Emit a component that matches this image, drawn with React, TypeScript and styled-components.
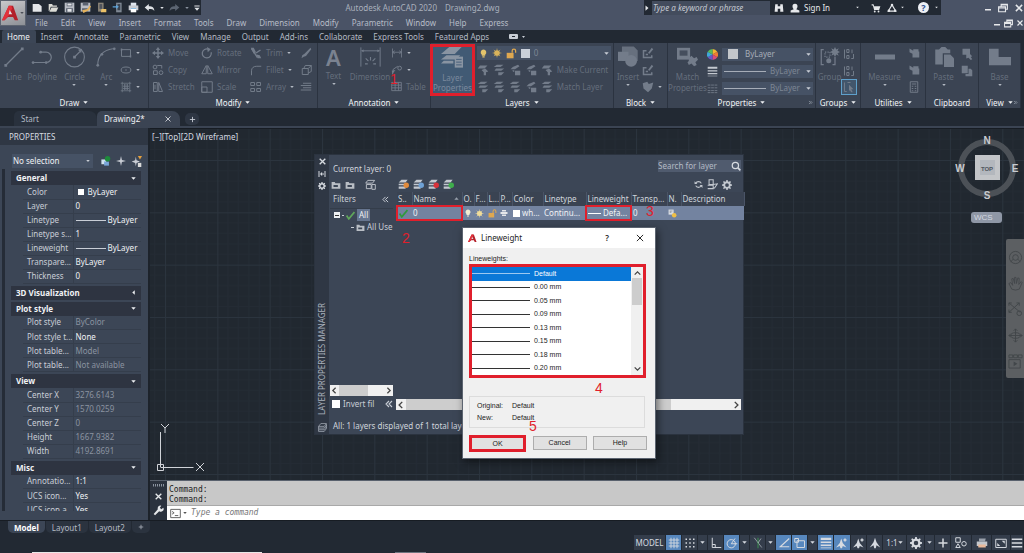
import React from 'react';
import styled, { createGlobalStyle, css } from 'styled-components';

const c = {
  bar: '#4a5366',
  ribbon: '#3b4453',
  dark: '#222933',
  canvas: '#212830',
  panel: '#3c4656',
  strip: '#2f3744',
  section: '#2e3441',
  field: '#465265',
  dim: '#656e7c',
  icon: '#737c8a',
  text: '#c9ced6',
  white: '#f0f2f5',
  red: '#e01f2c',
  blue: '#5787bd',
};

const Global = createGlobalStyle`
  *, *::before, *::after { box-sizing: border-box; }
  html, body { margin: 0; padding: 0; background: ${c.dark}; }
  body { font-family: "Noto Sans", "Open Sans", sans-serif; font-size: 8px; line-height: 12px; color: ${c.text}; overflow: hidden; }
  button, input, select { font: inherit; color: inherit; margin: 0; padding: 0; border: 0; background: none; border-radius: 0; outline: none; }
  button { white-space: nowrap; }
  svg { display: block; flex: none; }
  table { border-collapse: collapse; }
`;

/* ---------- icons ---------- */

const line = { fill: 'none', stroke: 'currentColor', strokeWidth: 1.3 };
const solid = { fill: 'currentColor' };

const glyphs: Record<string, React.ReactNode> = {
  newFile: <path d="M1 3h9l4 3v8H1z" fill="#e4e6e9" />,
  open: <g fill="#dcdcd6"><path d="M1 3h5l1 2h6v2H4l-2 6H1z" /><path d="M5 8h10l-3 6H2z" /></g>,
  save: <g><path d="M1 1h14v14H1z" fill="#b9bdc4" /><path d="M4 1h8v5H4zM3 9h10v6H3z" fill="#5b6370" /><path d="M5 2h6v3H5zM5 10h6v4H5z" fill="#e2e4e7" /></g>,
  saveAs: <g><path d="M1 1h14v13H1z" fill="#b9bdc4" /><path d="M4 1h8v4H4zM3 9h8v5H3z" fill="#5b6370" /><path d="M3 12l8-2 3-5 2 1-3 6-8 4z" fill="#e3b15b" /></g>,
  webOpen: <g><path d="M3 1h8v13H3z" fill="#8b8577" /><path d="M5 3h4v7H5z" fill="#4f535c" /><path d="M8 10h7v5H7z" fill="#edc267" /></g>,
  mobile: <g><path d="M6 1h8v14H6z" fill="#7f8894" /><path d="M8 3h4v9H8z" fill="#39414d" /><path d="M1 6h5V4l4 3-4 3V8H1z" fill="#5fa3d8" /></g>,
  print: <g><path d="M4 1h8v5H4z" fill="#dfe6ee" /><path d="M1 5h14v7H1z" fill="#c8ccd2" /><path d="M4 9h8v6H4z" fill="#fff" /><path d="M4 9h8v1H4z" fill="#5fa3d8" /></g>,
  undo: <path d="M7 3v3c5 0 8 2 8 7-2-3-4-3-8-3v3L1 8z" {...solid} />,
  redo: <path d="M9 3v3c-5 0-8 2-8 7 2-3 4-3 8-3v3l6-5z" {...solid} />,
  down: <path d="M1 4h14l-7 8z" {...solid} />,
  left: <path d="M12 1v14L4 8z" {...solid} />,
  right: <path d="M4 1v14l8-7z" {...solid} />,
  customize: <path d="M1 1h14v3H1zM1 7h14l-7 8z" {...solid} />,
  binoculars: <path d="M2 2h4v3h4V2h4l1 12h-5V9H6v5H1z" {...solid} />,
  user: <path d="M8 1c3 0 4 2 4 4s-1 4-2 5l5 2v3H1v-3l5-2C5 9 4 7 4 5s1-4 4-4z" {...solid} />,
  cart: <g><path d="M1 2h3l1 3h10l-2 6H5L3 4H1z" {...solid} /><circle cx="6" cy="13.5" r="1.5" {...solid} /><circle cx="12" cy="13.5" r="1.5" {...solid} /></g>,
  tri: <g><path d="M8 3l6 10H2z" {...line} strokeWidth="1.8" /><circle cx="8" cy="3" r="2" {...solid} /><circle cx="3" cy="12.5" r="2" {...solid} /><circle cx="13" cy="12.5" r="2" {...solid} /></g>,
  min: <path d="M2 10h12v3H2z" {...solid} />,
  restore: <path d="M5 5V2h10v8h-3M1 6h11v8H1zM1 8h11M5 3h10" {...line} strokeWidth="1.8" />,
  close: <path d="M3 3l10 10M13 3L3 13" {...line} strokeWidth="2.400" />,
  thinClose: <path d="M3 3l10 10M13 3L3 13" {...line} strokeWidth="1.5" />,
  plus: <path d="M8 2v12M2 8h12" {...line} strokeWidth="2" />,
  lineTool: <g><path d="M2 14L14 2" {...line} strokeWidth=".9" /><path d="M1 13h2v2H1zM13 1h2v2h-2z" {...solid} /></g>,
  polyline: <g><path d="M1 12h10a3.500 3.500 0 0 0 0-7.500H7" {...line} strokeWidth=".9" /><circle cx="1.500" cy="12" r="1" {...solid} /><circle cx="11" cy="12" r="1" {...solid} /><circle cx="7" cy="4.500" r="1" {...solid} /></g>,
  circle: <g><circle cx="8" cy="8" r="7.200" {...line} strokeWidth=".8" /><path d="M8 8l4-4" {...line} strokeWidth=".8" /><path d="M7 7h2v2H7zM13.500 2l-.7 3-2.300-2.200z" {...solid} /></g>,
  arc: <g><path d="M2 14C2 7 6 3 13 2" {...line} strokeWidth=".8" /><circle cx="2" cy="14" r="1" {...solid} /><circle cx="5" cy="6" r="1" {...solid} /><circle cx="14" cy="2" r="1" {...solid} /></g>,
  rect: <g><path d="M2 3.500h12v9H2z" {...line} /><path d="M1 2h2v3H1zM13 11h2v3h-2z" {...solid} /></g>,
  ellipse: <g><ellipse cx="8" cy="8" rx="6.500" ry="4" {...line} /><circle cx="8" cy="8" r="1" {...solid} /></g>,
  hatch: <path d="M3 1v14M13 1v14M1 3h14M1 13h14M6 4v8M8 4v8M10 4v8M4 7h8M4 10h8" {...line} strokeWidth="1" />,
  move: <path d="M8 0l3 4H9v3h3V5l4 3-4 3V9H9v3h2l-3 4-3-4h2V9H4v2L0 8l4-3v2h3V4H5z" {...solid} />,
  copy: <g><circle cx="4" cy="4" r="2.500" {...line} /><path d="M7 2h6v4M2 9h5v5H2z" {...line} /><circle cx="12" cy="11.500" r="2.500" {...line} /></g>,
  stretch: <path d="M2 2h5v12H2zM9 2l5 12H9zM4 5v6" {...line} />,
  rotate: <g><path d="M10 3a6 6 0 1 0 3.500 4" {...line} strokeWidth="1.700" /><path d="M8 0l5 3-4 4z" {...solid} /></g>,
  mirror: <path d="M7 2v11H1zM9 2v11h6z" {...line} />,
  scale: <path d="M1 1h14v14H1zM1 8h7v7H1z" {...line} />,
  trim: <g><path d="M2 2l8 12M8 8l6-4" {...line} strokeWidth="2" /><path d="M1 1h4l3 6-3 2zM9 10l4 1 2 4h-5z" {...solid} /></g>,
  fillet: <path d="M2 15V9c0-4 3-6 7-6h6" {...line} />,
  array: <path d="M1 2h5v4H1zM9 2h5v4H9zM1 10h5v4H1zM9 10h5v4H9z" {...line} />,
  erase: <path d="M14 1l1 2-7 9-3 1-3 2 1-4 3-2z" {...solid} />,
  explode: <path d="M3 6h8v8H3zM5 6l2-4h8v8l-4 2M11 6l4-4" {...line} />,
  offset: <path d="M4 3h11M1 6h14M4 9h11M1 12h14" {...line} />,
  dimension: <g><path d="M1 1v14M15 1v14M2 3.500h12" {...line} strokeWidth=".7" /><path d="M1 3.500l2-1v2zM15 3.500l-2-1v2z" {...solid} /><path d="M4.500 9l2 2M8 8v2.500M11.500 9l-2 2M4 13h2M10 13h2" {...line} strokeWidth=".8" /></g>,
  linear: <path d="M2 2v12M14 2v12M2 7h12M5 5L2 7l3 2M11 5l3 2-3 2" {...line} strokeWidth="1.100" />,
  leader: <g><path d="M2 14l1-7 6-4" {...line} /><circle cx="11.500" cy="5.500" r="2.500" {...line} /><path d="M1 9l5-1-4 5z" {...solid} /></g>,
  grid: <path d="M1 2h14v12H1zM1 6h14M1 10h14M6 2v12M11 2v12" {...line} />,
  layers: <g {...solid}><path d="M6 0h9l-5 5H0z" /><path d="M4 6h10l-3 3H0z" /><path d="M2 10h7v2H0z" /><path d="M10 7h6v8h-6z" /><path d="M11 9h4M11 11h4M11 13h4" stroke="#47607b" strokeWidth=".7" /></g>,
  bulb: <path d="M8 1a5 5 0 0 1 3 9v2H5v-2a5 5 0 0 1 3-9zM6 13h4v2H6z" {...solid} />,
  sun: <g><circle cx="8" cy="8" r="4.500" {...solid} /><path d="M8 1v14M1 8h14M3 3l10 10M13 3L3 13" {...line} strokeWidth="1" /></g>,
  lock: <g><path d="M1 7h10v8H1z" {...solid} /><path d="M9 7V4a2.500 2.500 0 0 1 5 0v3" {...line} strokeWidth="1.800" /></g>,
  layerA: <path d="M4 2h10l-4 4H1zM6 8l5-2 4 4-3 1v4H9v-4z" {...solid} />,
  layerB: <path d="M5 1h9l-4 3H1zM4 6h11l-4 3H2zM7 11h8l-4 4H7z" {...solid} />,
  layerC: <path d="M5 4l7-3 2 2-6 4H2zM8 9h7v6H8zM4 9l3-1v3z" {...solid} />,
  insert: <g {...solid}><path d="M3 0h9l3 3v8H3z" opacity=".8" /><path d="M0 4h8v7H0z" /><circle cx="10" cy="11" r="4.500" /></g>,
  blockEdit: <path d="M1 4h5v2H3v7h9v-2h2v4H1zM8 8l5-7 2 2-5 6zM5 9h3v2H5z" {...solid} />,
  tag: <path d="M1 3l6-2 2 3 6-2-2 8-5 5-6-5z" {...solid} />,
  match: <g {...solid}><path d="M0 1h10v9H0z" /><path d="M2 3h6v4H2z" fill="#454e5d" /><path d="M9 9l2-2 2 2 2-1 1 2-2 2 1 2-2 1-2-2-2 1-1-2 1-1z" /></g>,
  weights: <path d="M1 1h14v3H1zM1 6h14v2H1zM1 10h14v2H1zM1 14h14v1H1z" {...solid} />,
  dashes: <path d="M1 3h14M1 7h14M1 11h14M1 14h14" {...line} strokeDasharray="4 1" />,
  group: <g><path d="M3 2H1v12h2M12 8v6h-2" {...line} strokeWidth="1" /><path d="M4 4h4v4H4z" {...line} strokeWidth="1" strokeDasharray="1 1" /><circle cx="7" cy="11" r="2" {...solid} /><path d="M12 0l1 2 2-1-1 2 2 1-2 1 1 2-2-1-1 2-1-2-2 1 1-2-2-1 2-1-1-2 2 1z" {...solid} /></g>,
  ungroup: <path d="M2 2v12M5 2h3v4H5zM5 10h3v4H5zM12 2v5M14 8v6h-3" {...line} />,
  select: <g><path d="M2 2v12h3M10 2H6" {...line} /><path d="M8 5l6 6h-3l2 4h-2l-2-3-1 2z" {...solid} /></g>,
  measure: <path d="M0 6h16v4H0z" {...solid} />,
  quick: <path d="M2 2l5 3V3h7v3h1v8H6V9L2 7z" {...solid} />,
  calc: <path d="M3 1h10v14H3zM5 4h6M5 7h2M9 7h2M5 10h2M9 10h2M5 13h2M9 13h2" {...line} />,
  paste: <g {...solid}><path d="M1 2h3l2-2h3l2 2h2v3H7v9H1z" /><path d="M8 6h5l3 3v7H8z" /></g>,
  cut: <path d="M2 1h10v7l3 3-2 1 2 3-2 1-3-3-3 1V9H2z" {...solid} />,
  copyDoc: <path d="M1 1h8v10H1zM10 5h3l2 2v8H6v-3h4z" {...solid} />,
  base: <path d="M0 2h7v6h9v6H0z" {...solid} />,
  pick: <g><path d="M2 5h7v7H2z" fill="#cfe3ee" /><path d="M6 8h7v6H6z" fill="#79a6d8" /><circle cx="11" cy="4" r="4" fill="#1e8a3c" /></g>,
  cross: <path d="M8 0l1.500 6.500L16 8l-6.500 1.500L8 16 6.500 9.500 0 8l6.500-1.500z" {...solid} />,
  crossFilter: <g><path d="M7 1l1 5 5 2-5 2-1 5-1-5-5-2 5-2z" {...solid} /><path d="M10 0h6l-3 5z" fill="#e6a03c" /><path d="M10 10h5v6h-5z" fill="#d9d9d9" /></g>,
  newVp: <g><path d="M1 1h9v9H1z" fill="#d9dde3" /><path d="M3 3h5v1H3zM3 5h3v1H3z" fill="#6b7485" /><circle cx="11" cy="11" r="4" fill="#f0bf45" /></g>,
  folder: <path d="M1 3h5l1 2h8v9H1zM4 8h7v3H4z" fill="#b9bec5" fillRule="evenodd" />,
  states: <path d="M4 2h10l-3 4H1zM2 8h7v6H2zM10 8h5v7h-5z" {...line} />,
  search: <g><circle cx="7" cy="7" r="5" {...line} strokeWidth="2" /><path d="M11 11l4 4" {...line} strokeWidth="2.500" /></g>,
  refresh: <g><path d="M3 10a5.500 5.500 0 0 0 10 0M13 6A5.500 5.500 0 0 0 3 6" {...line} strokeWidth="2" /><path d="M1 2v5h5zM15 14V9h-5z" {...solid} /></g>,
  overrides: <path d="M3 1h6v7H3zM1 9h8v5H1M9 8l6-1-4 6H9" {...line} strokeWidth="1.500" />,
  gear: <path fillRule="evenodd" d="M7 0h2l.6 2.300 1.500.6L13 1.600 14.400 3l-1.300 2 .6 1.400L16 7v2l-2.300.6-.6 1.500 1.300 1.900-1.400 1.400-1.900-1.300-1.500.6L9 16H7l-.6-2.300-1.500-.6L3 14.400 1.600 13l1.300-1.900-.6-1.500L0 9V7l2.300-.6.6-1.500L1.600 3 3 1.600l1.900 1.300 1.500-.6zM8 5a3 3 0 1 0 0 6 3 3 0 0 0 0-6z" {...solid} />,
  pin: <path d="M1 2h2v12H1zM13 2h2v12h-2zM4 8l4-4v8zM12 8L9 5v6z" {...solid} />,
  check: <path d="M1 8l4 6L15 2" {...line} strokeWidth="3" />,
  sort: <path d="M1 12h14L8 4z" {...solid} />,
  plot: <path d="M4 2h8v3H4zM1 6h14v4H1zM4 11h8v3H4z" {...solid} />,
  wrench: <path d="M15 4l-3 2-2-2 2-3a4 4 0 0 0-5 5l-6 7 2 2 6-6a4 4 0 0 0 6-5z" {...solid} />,
  prompt: <path d="M1 2h14v12H1zM3 5l3 2-3 2M7 11h5" {...line} />,
  dots: <g {...solid}>{[2, 7, 12].map((y) => [2, 7, 12].map((x) => <rect key={`${x}${y}`} x={x} y={y} width="2" height="2" />))}</g>,
  snapGrid: <path d="M4 1v14M12 1v14M1 4h14M1 12h14M8 1v14M1 8h14" {...line} strokeWidth="1.200" />,
  ortho: <path d="M3 1v13h12M3 10h4v4" {...line} />,
  polar: <g><circle cx="7" cy="9" r="5.500" {...line} /><path d="M7 9h8M7 9l5-7" {...line} /></g>,
  iso: <g><path d="M3 1l10 13" {...line} opacity=".6" /><path d="M8 1v14" {...line} stroke="#3fa653" opacity=".8" /><path d="M8 8l4-6" {...line} opacity=".6" /></g>,
  otrack: <path d="M15 2L3 13h12" {...line} strokeWidth="1.500" />,
  osnap: <g><path d="M4 5h10v9H4z" {...line} /><path d="M1 2h5v5H1z" {...line} /></g>,
  person: <path d="M8 1l2 6 5 7-5-3-1 4H7l-1-4-5 3 5-7z" {...solid} />,
  personStar: <g><path d="M7 2l2 6 5 6-5-2-1 3H6l-1-3-5 2 5-6z" {...solid} /><path d="M12 1l1 2 2 1-2 1-1 2-1-2-2-1 2-1z" {...solid} /></g>,
  isolate: <g><path d="M1 1h6v6H1zM4 9l3 5H1z" {...line} /><circle cx="12" cy="9" r="3" {...line} /></g>,
  printer: <g><path d="M4 2h9l-1 4H4z" fill="#9aa1ab" /><path d="M1 6h14v6H1z" fill="#c3c7cc" /><path d="M3 10h10v4H3z" fill="#e9b99a" /></g>,
  expand: <g><path d="M1 3h14v11H1z" {...line} /><path d="M9 5h4v4zM3 8v4h4z" {...solid} /></g>,
  menu: <path d="M1 3h14M1 8h14M1 13h14" {...line} strokeWidth="1.800" />,
  wheel: <g><circle cx="8" cy="8" r="6.500" {...line} strokeWidth="1" /><circle cx="8" cy="8" r="3" {...line} strokeWidth="1" /><path d="M3 13l2-3M13 13l-2-3" {...line} strokeWidth="1" /></g>,
  hand: <path d="M4 14L1 8l2-1 2 3-1-7 1.500-.5L7 8V1.500h1.500L9 8l1.500-6 1.500.5L11.500 9 14 6l1 1-3 7-4 1z" {...line} strokeWidth=".9" />,
  zoomExt: <g><path d="M1 1l12 10M12 1L1 11M1 4V1h3M9 1h3v3M1 8v3h3" {...line} strokeWidth="1" /><circle cx="12" cy="12" r="2.500" {...line} strokeWidth="1" /></g>,
  orbit: <g><path d="M8 1v14M6 3l2-2 2 2M6 13l2 2 2-2M1 8h14M3 6L1 8l2 2M13 6l2 2-2 2" {...line} strokeWidth="1" /><ellipse cx="8" cy="8" rx="5" ry="3" {...line} strokeWidth="1" /></g>,
  motion: <g><path d="M1 1h4v3H1zM6 1h4v3H6zM11 1h4v3h-4zM1 6h12v9H1z" {...line} strokeWidth="1" /><path d="M6 8v5l4-2.500z" {...solid} /></g>,
  collapse: <path d="M8 2L2 8l6 6M14 2L8 8l6 6" {...line} strokeWidth="2.200" />,
  chevL: <path d="M10 3L5 8l5 5" {...line} strokeWidth="2.200" />,
  chevR: <path d="M6 3l5 5-5 5" {...line} strokeWidth="2.200" />,
  chevU: <path d="M3 10l5-5 5 5" {...line} strokeWidth="2.200" />,
  chevD: <path d="M3 6l5 5 5-5" {...line} strokeWidth="2.200" />,
  more: <path d="M3 3l5 5-5 5M8 3l5 5-5 5" {...line} strokeWidth="2.200" />,
  stack: <path d="M5 1h10L11 6H1zM1 6v3l10 0 4-5M1 9v3h10l4-5M1 12v3h10l4-5V2" {...line} />,
};

type IconProps = { name: string; w?: number; h?: number; color?: string };
const Icon = ({ name, w = 12, h, color }: IconProps) => (
  <svg width={w} height={h ?? w} viewBox="0 0 16 16" color={color} aria-hidden="true">
    {glyphs[name]}
  </svg>
);

const LetterMark = ({ size, base = '#b3202a' }: { size: number; base?: string }) => (
  <svg width={size} height={size} viewBox="0 0 20 20" aria-hidden="true">
    <path d="M8 1h5l6 17h-4l-2-4H7l-4 4H0z" fill={base} />
    <path d="M8 1h3l1 3-4 8-5 6H0z" fill="#e2323b" />
    <path d="M9 6l3 5H8z" fill="#dfe0e2" />
  </svg>
);

/* ---------- header ---------- */

const Shell = styled.div`display: flex; flex-direction: column; height: 100vh; min-height: 553px;`;
const Header = styled.header`display: grid; grid-template-columns: 27px minmax(0, 1fr); height: 30px; flex: none; background: ${c.bar};`;
const AppButton = styled.button`
  display: flex; align-items: center; justify-content: center; gap: 1px; width: 26px; height: 26px; color: #4b4f57;
  background: linear-gradient(160deg, #c9c9cb, #8d9096); border: 1px solid #5d6470;
`;
const HeaderRows = styled.div`display: flex; flex-direction: column; min-width: 0;`;
const TitleRow = styled.div`display: flex; height: 15px; align-items: stretch; justify-content: space-between;`;
const QuickAccess = styled.div`display: flex; align-items: center; gap: 4px; padding: 0 3px 0 4px; width: 174px; background: ${c.dark}; color: #dfe2e6;`;
const Tool = styled.button<{ $w?: number }>`
  display: flex; align-items: center; justify-content: center; width: ${(p) => (p.$w ? `${p.$w}px` : 'auto')}; flex: none;
`;
const DocTitle = styled.h1`margin: 0; font-size: 8px; line-height: 15px; font-weight: 400; color: #a9b0bc; white-space: pre; display: flex; gap: 8px;`;
const InfoCenter = styled.div`display: flex; align-items: center; height: 15px; background: ${c.dark}; color: #e6e8eb; width: 297px; flex: none;`;
const KeywordInput = styled.input`
  width: 118px; height: 14px; margin: 0 4px 0 2px; padding-left: 1px; background: #434c5d; font-size: 8px; font-style: italic;
  &::placeholder { color: #c3c8d0; opacity: 1; }
`;
const SignIn = styled.button`width: 44px; text-align: left; padding-left: 4px;`;
const HelpMark = styled.button`width: 11px; height: 11px; border-radius: 50%; background: #eef0f4; color: #2d4f8f; font-weight: 700; font-size: 9px; line-height: 11px; margin: 0 6px;`;
const WindowButtons = styled.div`display: flex; align-items: center; gap: 6px; color: #e6e8eb;`;
const TitleRight = styled.div`display: flex; align-items: center; gap: 43px;`;
const MenuRow = styled.nav`display: flex; height: 15px; align-items: center; padding: 1px 0 0 8px; gap: 13px; color: #b6bcc7;`;
const MenuEnd = styled(WindowButtons)`margin-left: auto; gap: 3px;`;

/* ---------- ribbon ---------- */

const RibbonTabs = styled.div`display: flex; height: 13px; flex: none; background: ${c.dark}; padding-left: 2px; color: #b4bac4; align-items: stretch;`;
const RibbonTab = styled.button<{ $on?: boolean }>`
  padding: 0 6px 0 5px; line-height: 13px; ${(p) => p.$on && css`background: ${c.panel}; color: ${c.white}; border-radius: 2px 2px 0 0;`}
`;
const Ribbon = styled.section`
  display: grid; height: 65px; flex: none; background: ${c.ribbon}; margin-right: 3px;
  grid-template-columns: minmax(0, 149fr) minmax(0, 169fr) minmax(0, 113fr) minmax(0, 183fr) minmax(0, 54fr) minmax(0, 148fr) minmax(0, 45fr) minmax(0, 65fr) minmax(0, 53fr) minmax(0, 42fr);
`;
const Panel = styled.div`display: flex; flex-direction: column; border-right: 1px solid #2b3340; color: ${c.dim}; min-width: 0;`;
const PanelBody = styled.div<{ $cols: string; $pad?: number }>`
  display: grid; grid-template-columns: ${(p) => p.$cols}; height: 54px; padding: 2px 0 0 ${(p) => p.$pad ?? 0}px; min-width: 0;
`;
const PanelTitle = styled.button`display: flex; height: 11px; align-items: center; justify-content: center; gap: 4px; color: ${c.white}; line-height: 11px; position: relative;`;
const Corner = styled.span`position: absolute; right: 2px; top: 3px;`;
const BigTool = styled.button`
  display: flex; flex-direction: column; align-items: center; min-width: 0; height: 50px; line-height: 10px; gap: 1px;
  & > svg:first-child { margin: 1px 0 3px; }
`;
const SmallCol = styled.div`display: flex; flex-direction: column; height: 50px; min-width: 0;`;
const SmallTool = styled.button<{ $on?: boolean }>`
  display: flex; align-items: center; gap: 4px; height: 17px; text-align: left; position: relative;
  ${(p) => p.$on && css`width: 16px; height: 16px; justify-content: center; margin-left: -2px; background: #42566c; border: 1px solid #5fa0cb;`}
`;
const BigLetter = styled.span`font-size: 22px; line-height: 25px; font-weight: 600; height: 25px; color: #7a8290;`;
const LayerButton = styled.button`
  position: relative; z-index: 1; display: flex; flex-direction: column; align-items: center; height: 52px; margin: -1px 0 0 -1px;
  line-height: 10px; color: #7b899d; background: #415a74; border: 3px solid ${c.red};
  & > svg { margin-bottom: 4px; }
`;
const LayerSide = styled.div`display: flex; flex-direction: column; gap: 2px; padding: 1px 2px 0 2px; min-width: 0;`;
const ComboButton = styled.button<{ $h?: number; $bright?: boolean }>`
  display: flex; align-items: center; height: ${(p) => p.$h ?? 14}px; width: 100%; background: ${c.field}; padding: 0 2px; gap: 4px; color: ${(p) => (p.$bright ? '#a6adb8' : '#7d8694')};
  & > svg:last-child { margin-left: auto; color: ${c.text}; }
`;
const ToolRow = styled.div`display: flex; height: 15px; align-items: center; gap: 4px;`;
const Swatch = styled.span<{ $s: number; $c?: string; $m?: string }>`
  display: inline-block; width: ${(p) => p.$s}px; height: ${(p) => p.$s}px; margin: ${(p) => p.$m ?? '0'}; background: ${(p) => p.$c ?? '#fff'}; flex: none;
`;
const Rule = styled.span<{ $w: number; $c?: string }>`display: inline-block; width: ${(p) => p.$w}px; height: 1px; background: ${(p) => p.$c ?? c.text}; vertical-align: middle; flex: none;`;
const PropsStack = styled.div`display: grid; grid-template-columns: 15px minmax(0, 1fr); align-items: center; row-gap: 3px; padding: 2px 2px 0 0; height: 50px;`;
const Mark = styled.span<{ $x: number; $y: number }>`
  position: absolute; left: ${(p) => p.$x}px; top: ${(p) => p.$y}px; z-index: 3; color: ${c.red};
  font: 14px/15px "Liberation Sans", sans-serif; pointer-events: none;
`;

const Dim = () => <Icon name="down" w={4} color="#b4bac4" />;

const Big = ({ icon, w, h, label, arrow }: { icon: string; w: number; h: number; label: string; arrow?: boolean }) => (
  <BigTool><Icon name={icon} w={w} h={h} color={c.icon} /><span>{label}</span>{arrow && <Dim />}</BigTool>
);
const Small = ({ icon, label, arrow, on }: { icon: string; label?: string; arrow?: boolean; on?: boolean }) => (
  <SmallTool $on={on} aria-label={label ?? icon}><Icon name={icon} w={12} color={c.icon} />{label}{arrow && <Dim />}</SmallTool>
);
const Title = ({ children, arrow = true, corner }: { children: string; arrow?: boolean; corner?: boolean }) => (
  <PanelTitle>{children}{arrow && <Icon name="down" w={5} />}{corner && <Corner><Icon name="more" w={5} color="#98a0ac" /></Corner>}</PanelTitle>
);
const LayerTools = ({ icons, label }: { icons: string[]; label: string }) => (
  <ToolRow>{icons.map((n, i) => <Tool key={i} aria-label="Layer tool"><Icon name={n} color={c.icon} /></Tool>)}<button>{label}</button></ToolRow>
);

const RibbonPanels = () => (
  <Ribbon>
    <Panel>
      <PanelBody $cols="28fr 29fr 36fr 28fr 28fr">
        <Big icon="lineTool" w={22} h={22} label="Line" />
        <Big icon="polyline" w={26} h={22} label="Polyline" />
        <Big icon="circle" w={23} h={22} label="Circle" arrow />
        <Big icon="arc" w={22} h={22} label="Arc" arrow />
        <SmallCol><Small icon="rect" arrow /><Small icon="ellipse" arrow /><Small icon="hatch" arrow /></SmallCol>
      </PanelBody>
      <Title>Draw</Title>
    </Panel>
    <Panel>
      <PanelBody $cols="49fr 49fr 50fr 17fr" $pad={3}>
        <SmallCol><Small icon="move" label="Move" /><Small icon="copy" label="Copy" /><Small icon="stretch" label="Stretch" /></SmallCol>
        <SmallCol><Small icon="rotate" label="Rotate" /><Small icon="mirror" label="Mirror" /><Small icon="scale" label="Scale" /></SmallCol>
        <SmallCol><Small icon="trim" label="Trim" arrow /><Small icon="fillet" label="Fillet" arrow /><Small icon="array" label="Array" arrow /></SmallCol>
        <SmallCol><Small icon="erase" /><Small icon="explode" /><Small icon="offset" /></SmallCol>
      </PanelBody>
      <Title>Modify</Title>
    </Panel>
    <Panel>
      <PanelBody $cols="31fr 42fr 39fr">
        <BigTool><BigLetter>A</BigLetter><span>Text</span><Dim /></BigTool>
        <Big icon="dimension" w={23} h={22} label="Dimension" />
        <SmallCol>
          <Small icon="linear" arrow /><Small icon="leader" arrow />
          <SmallTool><Icon name="grid" w={11} color={c.icon} />Table<Mark $x={-1} $y={-6}>1</Mark></SmallTool>
        </SmallCol>
      </PanelBody>
      <Title>Annotation</Title>
    </Panel>
    <Panel>
      <PanelBody $cols="43fr 139fr">
        <LayerButton><Icon name="layers" w={22} h={22} color="#8994a2" /><span>Layer</span><span>Properties</span></LayerButton>
        <LayerSide>
          <ComboButton>
            <Icon name="bulb" w={9} color="#e3c46c" /><Icon name="sun" w={10} color="#d9b45c" /><Icon name="lock" w={11} color="#dfa850" />
            <Swatch $s={9} $c="#c9d0da" />0<Icon name="down" w={5} />
          </ComboButton>
          <LayerTools icons={['layerA', 'layerB', 'layerC', 'layerC', 'layerA']} label="Make Current" />
          <LayerTools icons={['layerB', 'layerB', 'layerB', 'layerC', 'layerB']} label="Match Layer" />
        </LayerSide>
      </PanelBody>
      <Title>Layers</Title>
    </Panel>
    <Panel>
      <PanelBody $cols="28fr 25fr">
        <Big icon="insert" w={21} h={22} label="Insert" arrow />
        <SmallCol><Small icon="blockEdit" /><Small icon="blockEdit" /><Small icon="tag" arrow /></SmallCol>
      </PanelBody>
      <Title>Block</Title>
    </Panel>
    <Panel>
      <PanelBody $cols="39fr 108fr">
        <BigTool><Icon name="match" w={21} h={22} color={c.icon} /><span>Match</span><span>Properties</span></BigTool>
        <PropsStack>
          <svg width="11" height="11" viewBox="0 0 12 12">
            <path d="M6 6V0a6 6 0 0 1 5.200 3z" fill="#f2b632" /><path d="M6 6l5.200-3a6 6 0 0 1 0 6z" fill="#f07a35" />
            <path d="M6 6l5.200 3A6 6 0 0 1 6 12z" fill="#d94b7c" /><path d="M6 6v6a6 6 0 0 1-5.200-3z" fill="#6a58c8" />
            <path d="M6 6L.8 9a6 6 0 0 1 0-6z" fill="#3fa8d8" /><path d="M6 6L.8 3A6 6 0 0 1 6 0z" fill="#59b95a" />
          </svg>
          <ComboButton $h={13} $bright><Swatch $s={10} $c="#c3c6ca" $m="0 3px 0 4px" />ByLayer<Icon name="down" w={5} /></ComboButton>
          <Icon name="weights" w={11} color="#c3c8cf" />
          <ComboButton $h={13}><Rule $w={42} $c="#a6adb8" />ByLayer<Icon name="down" w={5} /></ComboButton>
          <Icon name="dashes" w={11} color={c.icon} />
          <ComboButton $h={13}><Rule $w={42} $c="#a6adb8" />ByLayer<Icon name="down" w={5} /></ComboButton>
        </PropsStack>
      </PanelBody>
      <Title corner>Properties</Title>
    </Panel>
    <Panel>
      <PanelBody $cols="27fr 17fr">
        <Big icon="group" w={20} h={22} label="Group" />
        <SmallCol><Small icon="ungroup" /><Small icon="ungroup" /><Small icon="select" on /></SmallCol>
      </PanelBody>
      <Title>Groups</Title>
    </Panel>
    <Panel>
      <PanelBody $cols="47fr 17fr">
        <Big icon="measure" w={20} h={22} label="Measure" arrow />
        <SmallCol><Small icon="quick" /><Small icon="quick" /><Small icon="calc" /></SmallCol>
      </PanelBody>
      <Title>Utilities</Title>
    </Panel>
    <Panel>
      <PanelBody $cols="35fr 17fr">
        <Big icon="paste" w={20} h={22} label="Paste" arrow />
        <SmallCol><Small icon="cut" /><Small icon="copyDoc" /></SmallCol>
      </PanelBody>
      <Title arrow={false}>Clipboard</Title>
    </Panel>
    <Panel>
      <PanelBody $cols="1fr"><Big icon="base" w={22} h={22} label="Base" arrow /></PanelBody>
      <Title corner>View</Title>
    </Panel>
  </Ribbon>
);

/* ---------- file tabs ---------- */

const FileTabs = styled.div`display: flex; align-items: flex-end; height: 20px; flex: none; padding-left: 14px; border-bottom: 2px solid ${c.ribbon};`;
const FileTab = styled.button<{ $on?: boolean }>`
  display: flex; align-items: center; justify-content: space-between; width: 83px; height: 15px; padding: 0 8px 0 7px; color: #b4bac4;
  background: #29313d; border-radius: 5px 8px 0 0; ${(p) => p.$on && css`background: ${c.ribbon}; color: ${c.white};`}
`;
const AddTab = styled.button`width: 14px; height: 12px; margin: 0 0 1px 5px; display: flex; align-items: center; justify-content: center; border-radius: 5px; background: #2e3643;`;

/* ---------- property palette ---------- */

const Work = styled.main`display: flex; flex: 1; min-height: 0;`;
const Palette = styled.aside`display: flex; flex-direction: column; width: 150px; flex: none; background: ${c.panel}; padding-bottom: 9px; border-right: 2px solid #1d232b;`;
const PaletteTitle = styled.h2`margin: 0; height: 17px; padding-left: 9px; font-size: 8px; line-height: 18px; font-weight: 400; background: ${c.strip}; color: #d6dae0; flex: none;`;
const PickRow = styled.div`display: flex; align-items: center; gap: 5px; margin: 9px 6px 1px 12px; height: 14px; flex: none; color: #c9cdd4;`;
const SelectWrap = styled.label`position: relative; width: 82px; height: 14px; background: ${c.field}; margin-right: 2px;`;
const PickSelect = styled.select`appearance: none; width: 100%; height: 14px; padding-left: 1px; color: ${c.white};`;
const SelectArrow = styled.span`position: absolute; right: 3px; top: 5px; pointer-events: none;`;
const Scroll = styled.div`flex: 1; min-height: 0; overflow: hidden; margin: 0 7px 0 2px; padding-left: 6px; border-left: 3px solid #252c37;`;
const SectionHead = styled.button`
  display: flex; align-items: center; justify-content: space-between; width: 100%; height: 14px; margin-top: 2px; padding: 0 5px;
  background: ${c.section}; color: ${c.white}; font-weight: 700; text-align: left;
`;
const PropTable = styled.table`
  width: 118px; margin-left: 12px; table-layout: fixed;
  th, td { height: 14px; padding: 0 0 0 4px; font-weight: 400; text-align: left; line-height: 12px; border-bottom: 1px solid #353e4c; white-space: nowrap; }
  th { width: 50px; border-right: 1px solid #353e4c; }
  td { padding-left: 2px; color: ${c.white}; }
`;
const Muted = styled.span`color: #8b93a0;`;

type Prop = [string, React.ReactNode];
const sections: { title: string; closed?: boolean; rows: Prop[] }[] = [
  {
    title: 'General',
    rows: [
      ['Color', <><Swatch $s={6} $m="0 4px 0 2px" />ByLayer</>],
      ['Layer', '0'],
      ['Linetype', <><Rule $w={30} /> ByLayer</>],
      ['Linetype s...', '1'],
      ['Lineweight', <><Rule $w={30} /> ByLayer</>],
      ['Transpare...', 'ByLayer'],
      ['Thickness', '0'],
    ],
  },
  { title: '3D Visualization', closed: true, rows: [] },
  {
    title: 'Plot style',
    rows: [
      ['Plot style', <Muted>ByColor</Muted>],
      ['Plot style t...', 'None'],
      ['Plot table...', <Muted>Model</Muted>],
      ['Plot table...', <Muted>Not available</Muted>],
    ],
  },
  {
    title: 'View',
    rows: [
      ['Center X', <Muted>3276.6143</Muted>],
      ['Center Y', <Muted>1570.0259</Muted>],
      ['Center Z', <Muted>0</Muted>],
      ['Height', <Muted>1667.9382</Muted>],
      ['Width', <Muted>4192.8691</Muted>],
    ],
  },
  { title: 'Misc', rows: [['Annotatio...', '1:1'], ['UCS icon...', 'Yes'], ['UCS icon a...', 'Yes']] },
];

const Properties = () => (
  <Palette>
    <PaletteTitle>PROPERTIES</PaletteTitle>
    <PickRow>
      <SelectWrap>
        <PickSelect aria-label="Selection"><option>No selection</option></PickSelect>
        <SelectArrow><Icon name="down" w={4} /></SelectArrow>
      </SelectWrap>
      <Tool aria-label="Toggle PICKADD"><Icon name="pick" w={11} /></Tool>
      <Tool aria-label="Select objects"><Icon name="cross" w={10} /></Tool>
      <Tool aria-label="Quick select"><Icon name="crossFilter" w={11} /></Tool>
    </PickRow>
    <Scroll>
      {sections.map((s) => (
        <div key={s.title}>
          <SectionHead aria-expanded={!s.closed}>{s.title}<Icon name={s.closed ? 'left' : 'down'} w={5} /></SectionHead>
          {s.rows.length > 0 && (
            <PropTable><tbody>{s.rows.map(([k, v], i) => <tr key={i}><th scope="row">{k}</th><td>{v}</td></tr>)}</tbody></PropTable>
          )}
        </div>
      ))}
    </Scroll>
  </Palette>
);

/* ---------- drawing area ---------- */

const Right = styled.div`display: flex; flex-direction: column; flex: 1; min-width: 0;`;
const Canvas = styled.section`position: relative; flex: 1; min-height: 0; background: ${c.canvas}; border-top: 1px solid #171c23; overflow: hidden;`;
const GridSvg = styled.svg`position: absolute; inset: 0; width: 100%; height: 100%;`;
const ViewLabel = styled.div`position: absolute; left: 2px; top: 2px; color: #d6dae0;`;
const Ucs = styled.svg`position: absolute; left: 4px; bottom: 0;`;
const Cube = styled.div`position: absolute; right: 5px; top: 6px; width: 64px; display: flex; flex-direction: column; align-items: center;`;
const Wcs = styled.button`
  margin: 11px 17px 0 0; align-self: flex-end; width: 31px; height: 11px; border-radius: 3px; background: #8f97a6; color: #d4d8e0;
  text-align: left; padding-left: 3px; line-height: 11px; font-family: "Liberation Sans", sans-serif;
`;
const NavBar = styled.div`
  position: absolute; right: 0; top: 110px; width: 18px; height: 139px; display: flex; flex-direction: column; align-items: center; gap: 11px;
  padding-top: 11px; background: #5c5f62; color: #42464a; border-radius: 2px 0 0 2px;
`;

const Nav = () => (
  <>
    <Cube>
      <svg width="64" height="66" viewBox="0 0 64 66">
        <circle cx="32" cy="33" r="26" fill="none" stroke="#4c5157" strokeWidth="6" />
        <rect x="20" y="20" width="25" height="25" fill="#c3c5c8" />
        <rect x="25" y="25" width="15" height="15" fill="#b3b7bd" />
        <g fontFamily="Liberation Sans, sans-serif" fontWeight="700" textAnchor="middle">
          <text x="32" y="36" fontSize="6" fill="#50565e">TOP</text>
          <g fontSize="10" fill="#c8cbd0"><text x="32" y="9">N</text><text x="32" y="64">S</text><text x="5" y="37">W</text><text x="60" y="37">E</text></g>
        </g>
      </svg>
      <Wcs>WCS</Wcs>
    </Cube>
    <NavBar>
      {['wheel', 'hand', 'zoomExt', 'orbit', 'motion'].map((n) => <Tool key={n} aria-label={n}><Icon name={n} w={15} /></Tool>)}
    </NavBar>
  </>
);

/* ---------- layer manager ---------- */

const Manager = styled.section`position: absolute; left: 164px; top: 25px; width: 430px; height: 281px; display: flex; background: ${c.panel}; border: 1px solid #2b333f;`;
const SideStrip = styled.div`display: flex; flex-direction: column; align-items: center; gap: 4px; width: 14px; padding: 2px 0; background: ${c.strip}; color: #d6dae0; flex: none;`;
const SideTitle = styled.h2`writing-mode: vertical-rl; transform: rotate(180deg); margin: auto 0 4px; font-size: 8px; line-height: 12px; font-weight: 400; color: #a9b0bb; white-space: nowrap;`;
const ManagerBody = styled.div`display: flex; flex-direction: column; flex: 1; min-width: 0; padding: 5px 2px 0 1px;`;
const TopLine = styled.div`display: flex; justify-content: space-between; height: 17px; padding-left: 3px; color: #d0d5dc;`;
const Current = styled.span`padding-top: 3px;`;
const SearchBox = styled.label`display: flex; align-items: center; width: 83px; height: 12px; background: #505b6e; color: #d6dae0;`;
const LayerSearch = styled.input`flex: 1; min-width: 0; height: 12px; &::placeholder { color: #b3bac5; opacity: 1; }`;
const ManagerTools = styled.div`display: flex; align-items: center; gap: 4px; height: 15px; padding: 0 9px 0 1px; color: #c3c8cf;`;
const Spacer = styled.span<{ $w?: number }>`${(p) => (p.$w ? `width: ${p.$w}px;` : 'flex: 1;')}`;
const Split = styled.div`display: flex; flex: 1; min-height: 0;`;
const Filters = styled.div`display: flex; flex-direction: column; width: 63px; flex: none; color: ${c.text};`;
const FilterHead = styled.div`display: flex; align-items: center; justify-content: space-between; height: 14px; padding: 0 4px 0 3px;`;
const Tree = styled.ul`list-style: none; margin: 2px 0 0; padding: 0 0 0 4px; flex: 1; border-top: 1px solid #343d4a; white-space: nowrap;`;
const TreeItem = styled.li<{ $child?: boolean }>`display: flex; align-items: center; gap: 2px; height: 12px; padding-left: ${(p) => (p.$child ? '17px' : '0')};`;
const Expander = styled.button`display: flex; width: 6px; height: 6px; && { background: #eef0f3; } &::after { content: ""; margin: 3px 1px; flex: 1; height: 1px; background: #333; }`;
const Chosen = styled.span`padding: 0 2px; background: #66758f; color: ${c.white};`;
const ScrollBar = styled.div<{ $gap: number }>`
  display: flex; align-items: center; height: 11px; background: #f0f0f0; color: #444;
  & > span { flex: 1; height: 11px; background: #cdcdcd; margin-right: ${(p) => p.$gap}px; }
`;
const Invert = styled.label`display: flex; align-items: center; gap: 3px; height: 14px; padding-left: 2px; margin-top: 1px; white-space: nowrap;`;
const Box = styled.input`appearance: none; width: 8px; height: 8px; && { background: #fff; } flex: none;`;
const LayerPane = styled.div`display: flex; flex-direction: column; flex: 1; min-width: 0; margin-left: 3px;`;
const LayerTable = styled.table`
  width: 100%; table-layout: fixed;
  th, td { padding: 0 0 0 1px; text-align: left; font-weight: 400; white-space: nowrap; }
  th { height: 14px; background: #3a4352; border-right: 1px solid #4a5466; color: #d0d5dc; }
  td { height: 13px; background: #7383a0; color: ${c.white}; vertical-align: middle; }
  td > span, th > span { display: flex; align-items: center; gap: 2px; }
  th > span { justify-content: space-between; padding-right: 3px; }
`;
const MarkedCell = styled.td<{ $l?: boolean; $r?: boolean }>`
  && { border: 2px solid ${c.red}; ${(p) => p.$l && 'border-right: 0;'} ${(p) => p.$r && 'border-left: 0;'} }
`;
const PaneFoot = styled.div`margin-top: auto; padding-bottom: 1px;`;
const Status = styled.div`height: 23px; padding: 9px 0 0 3px; color: #d0d5dc; line-height: 11px; white-space: nowrap;`;

const cols: [string, number][] = [['S..', 15], ['Name', 50], ['O.', 12], ['F...', 13], ['L...', 12], ['P...', 13], ['Color', 31], ['Linetype', 43], ['Lineweight', 45], ['Transp...', 36], ['N.', 14], ['Description', 63]];

const LayerManager = () => (
  <Manager>
    <SideStrip>
      <Tool aria-label="Close palette"><Icon name="close" w={9} /></Tool>
      <Tool aria-label="Auto-hide"><Icon name="pin" w={8} /></Tool>
      <Tool aria-label="Palette settings"><Icon name="gear" w={8} /></Tool>
      <SideTitle>LAYER PROPERTIES MANAGER</SideTitle>
      <Icon name="stack" w={9} color="#a9b0bb" />
    </SideStrip>
    <ManagerBody>
      <TopLine>
        <Current>Current layer: 0</Current>
        <SearchBox><LayerSearch aria-label="Search for layer" placeholder="Search for layer" /><Icon name="search" w={10} /></SearchBox>
      </TopLine>
      <ManagerTools>
        <Tool aria-label="New property filter"><Icon name="folder" w={10} /></Tool>
        <Tool aria-label="New group filter"><Icon name="folder" w={10} /></Tool>
        <Spacer $w={2} />
        <Tool aria-label="Layer states"><Icon name="states" w={11} /></Tool>
        <Spacer $w={14} />
        {['#e08a3c', '#6fa2d6', '#d8323a', '#3fae4c'].map((k) => (
          <Tool key={k} aria-label="Layer action">
            <svg width="11" height="11" viewBox="0 0 16 16"><path d="M5 1h9l-3 4H1zM1 7h10v2H1zM1 11h10v3H1z" fill="#c3c8cf" /><circle cx="12" cy="9" r="4" fill={k} /></svg>
          </Tool>
        ))}
        <Spacer />
        <Tool aria-label="Refresh"><Icon name="refresh" w={9} /></Tool>
        <Tool aria-label="Overrides"><Icon name="overrides" w={11} /></Tool>
        <Tool aria-label="Settings"><Icon name="gear" w={10} /></Tool>
      </ManagerTools>
      <Split>
        <Filters>
          <FilterHead>Filters<Icon name="collapse" w={7} /></FilterHead>
          <Tree>
            <TreeItem><Expander aria-label="Collapse All" /><Rule $w={2} /><Icon name="check" w={9} color="#5fa65a" /><Chosen>All</Chosen></TreeItem>
            <TreeItem $child><Rule $w={3} /><Icon name="folder" w={9} />All Use</TreeItem>
          </Tree>
          <ScrollBar $gap={16}><Icon name="chevL" w={9} /><span /><Icon name="chevR" w={9} /></ScrollBar>
          <Invert><Box type="checkbox" />Invert fil<Spacer /><Icon name="collapse" w={8} /></Invert>
        </Filters>
        <LayerPane>
          <LayerTable>
            <colgroup>{cols.map(([n, w]) => <col key={n} style={{ width: w }} />)}</colgroup>
            <thead>
              <tr>{cols.map(([n]) => <th key={n} scope="col">{n === 'Name' ? <span>Name<Icon name="sort" w={5} color="#98a0ac" /></span> : n}</th>)}</tr>
            </thead>
            <tbody>
              <tr>
                <MarkedCell $l><Icon name="check" w={9} color="#2f9a3c" /></MarkedCell>
                <MarkedCell $r>0</MarkedCell>
                <td><Icon name="bulb" w={8} color="#f3ecd0" /></td>
                <td><Icon name="sun" w={9} color="#f0dc9a" /></td>
                <td><Icon name="lock" w={9} color="#dfa850" /></td>
                <td><Icon name="plot" w={8} color="#e4e6ea" /></td>
                <td><span><Swatch $s={7} />wh...</span></td>
                <td>Continu...</td>
                <MarkedCell><span><Rule $w={13} $c="#fff" />Defa...</span></MarkedCell>
                <td>0</td>
                <td><Icon name="newVp" w={9} /></td>
                <td />
              </tr>
            </tbody>
          </LayerTable>
          <PaneFoot><ScrollBar $gap={60}><Icon name="chevL" w={10} /><span /><Icon name="chevR" w={10} /></ScrollBar></PaneFoot>
        </LayerPane>
      </Split>
      <Status>All: 1 layers displayed of 1 total layers</Status>
    </ManagerBody>
    <Mark $x={87} $y={76}>2</Mark>
    <Mark $x={331} $y={49}>3</Mark>
  </Manager>
);

/* ---------- lineweight dialog ---------- */

const Dialog = styled.section`
  position: absolute; left: 312px; top: 98px; width: 194px; height: 232px; display: flex; flex-direction: column; z-index: 2;
  font-family: "Liberation Sans", sans-serif; font-size: 7px; color: #1c1c1c; background: #f0f0f0; border: 1px solid #5c6470; box-shadow: 2px 3px 8px rgba(0, 0, 0, .5);
`;
const DialogTitle = styled.div`display: flex; align-items: center; height: 20px; padding: 0 10px 0 5px; gap: 4px; background: #fff; font: 8px/20px "Noto Sans", sans-serif; flex: none;`;
const Help = styled.button`margin: 0 22px 0 auto; font-weight: 600;`;
const DialogBody = styled.div`display: flex; flex-direction: column; flex: 1; padding: 5px 8px 7px 6px;`;
const ListLabel = styled.h3`margin: 0; font-size: 7px; font-weight: 400; line-height: 11px;`;
const ListBox = styled.div`display: flex; height: 114px; border: 3px solid ${c.red}; background: #fff; width: 177px;`;
const Options = styled.ul`display: flex; flex-direction: column; flex: 1; margin: 0; padding: 0; list-style: none;`;
const Option = styled.li<{ $on?: boolean }>`
  flex: 1; display: flex; align-items: center; gap: 4px; ${(p) => p.$on && css`background: #0a78d7; color: #fff;`}
`;
const VBar = styled.div`
  display: flex; flex-direction: column; align-items: center; width: 12px; background: #f0f0f0; color: #444; padding: 2px 0;
  &::before { content: ""; order: 1; width: 10px; height: 27px; background: #cdcdcd; }
  & > :first-child { order: 0; }
  & > :last-child { order: 2; margin-top: auto; }
`;
const Info = styled.dl`display: grid; grid-template-columns: 35px 1fr; margin: 18px 0 0; width: 176px; height: 32px; padding: 3px 7px; line-height: 12px; border: 1px solid #dcdcdc; dd, dt { margin: 0; }`;
const Actions = styled.div`display: flex; justify-content: space-between; margin-top: auto; width: 178px; height: 16px; align-items: center;`;
const Action = styled.button<{ $main?: boolean }>`
  width: 54px; height: 14px; background: #e1e1e1; border: 1px solid #adadad; line-height: 12px;
  ${(p) => p.$main && css`width: 57px; height: 17px; border: 3px solid ${c.red}; line-height: 11px;`}
`;

const LineweightDialog = () => (
  <Dialog role="dialog" aria-label="Lineweight">
    <DialogTitle><LetterMark size={9} />Lineweight<Help>?</Help><Tool aria-label="Close"><Icon name="thinClose" w={10} /></Tool></DialogTitle>
    <DialogBody>
      <ListLabel>Lineweights:</ListLabel>
      <ListBox>
        <Options role="listbox">
          {['Default', '0.00 mm', '0.05 mm', '0.09 mm', '0.13 mm', '0.15 mm', '0.18 mm', '0.20 mm'].map((o, i) => (
            <Option key={o} $on={i === 0} role="option" aria-selected={i === 0}><Rule $w={58} $c={i === 0 ? '#9cc8f0' : '#333'} />{o}</Option>
          ))}
        </Options>
        <VBar><Icon name="chevU" w={9} /><Icon name="chevD" w={9} /></VBar>
      </ListBox>
      <Info><dt>Original:</dt><dd>Default</dd><dt>New:</dt><dd>Default</dd></Info>
      <Actions><Action $main>OK</Action><Action>Cancel</Action><Action>Help</Action></Actions>
    </DialogBody>
    <Mark $x={132} $y={153}>4</Mark>
    <Mark $x={66} $y={191}>5</Mark>
  </Dialog>
);

/* ---------- command line and status ---------- */

const Command = styled.div`display: flex; height: 40px; flex: none; font-family: "DejaVu Sans Mono", "Liberation Mono", monospace; color: #222; border-top: 1px solid #59616d;`;
const CommandStrip = styled.div`display: flex; flex-direction: column; align-items: center; justify-content: space-between; width: 17px; padding: 3px 0 4px; background: #2b323e; color: #e6e8eb;`;
const CommandMain = styled.div`display: flex; flex-direction: column; flex: 1; min-width: 0;`;
const History = styled.div`height: 25px; padding: 4px 0 0 2px; line-height: 10px; background: #c8c8c8; border-bottom: 1px solid #a9a9a9;`;
const Entry = styled.label`display: flex; align-items: center; flex: 1; background: #fff; padding-left: 3px; gap: 2px; color: #555;`;
const EntryInput = styled.input`flex: 1; padding-left: 2px; font-style: italic; height: 12px; &::placeholder { color: #777; opacity: 1; }`;
const LayoutTabs = styled.div`display: flex; height: 13px; flex: none; padding-left: 8px; gap: 1px; border-top: 1px solid #171c23;`;
const LayoutTab = styled.button<{ $on?: boolean }>`
  padding: 0 6px; height: 12px; line-height: 11px; background: #2b333f; color: #b4bac4; border-radius: 0 0 5px 5px;
  ${(p) => p.$on && css`background: ${c.panel}; color: #fff; font-weight: 700;`}
`;
const Foot = styled.footer`display: flex; align-items: flex-start; justify-content: flex-end; height: 20px; flex: none; padding-top: 2px; position: relative; color: #d6dae0;`;
const FootLine = styled.span<{ $x: number; $w: number; $c: string }>`position: absolute; left: ${(p) => p.$x}px; bottom: 0; width: ${(p) => p.$w}px; height: 1px; background: ${(p) => p.$c};`;
const Cell = styled.button<{ $on?: boolean; $w: number }>`
  display: flex; align-items: center; justify-content: center; width: ${(p) => p.$w}px; height: 15px; margin-right: 1px; background: ${(p) => (p.$on ? c.blue : '#343d4b')};
`;

const cells: [string, number, boolean?][] = [
  ['snapGrid', 15, true], ['dots', 15], ['down', 9], ['ortho', 15], ['polar', 15, true], ['down', 9], ['iso', 15], ['down', 9],
  ['otrack', 15, true], ['osnap', 15, true], ['down', 9], ['weights', 15, true], ['personStar', 16, true], ['personStar', 15], ['person', 15],
];
const cellsEnd: [string, number][] = [['gear', 17], ['down', 9], ['plus', 15], ['isolate', 20], ['printer', 19], ['expand', 18], ['menu', 12]];

const App = () => (
  <Shell>
    <Global />
    <Header>
      <AppButton aria-label="Application menu"><LetterMark size={17} /><Icon name="down" w={4} /></AppButton>
      <HeaderRows>
        <TitleRow>
          <QuickAccess>
            {['newFile', 'open', 'save', 'saveAs', 'webOpen', 'mobile', 'print', 'undo'].map((n) => <Tool key={n} $w={12} aria-label={n}><Icon name={n} w={11} /></Tool>)}
            <Tool $w={5} aria-label="Undo list"><Icon name="down" w={4} /></Tool>
            <Tool $w={12} aria-label="Redo"><Icon name="redo" w={11} color="#5c6572" /></Tool>
            <Tool $w={5} aria-label="Redo list"><Icon name="down" w={4} color="#8b93a0" /></Tool>
            <Tool $w={7} aria-label="Customize"><Icon name="customize" w={6} /></Tool>
          </QuickAccess>
          <DocTitle><span>Autodesk AutoCAD 2020</span><span>Drawing2.dwg</span></DocTitle>
          <TitleRight>
            <InfoCenter>
              <Icon name="right" w={6} />
              <KeywordInput aria-label="Search help" placeholder="Type a keyword or phrase" />
              <Tool $w={10} aria-label="Search"><Icon name="binoculars" w={10} /></Tool>
              <Spacer $w={6} /><Icon name="user" w={10} />
              <SignIn>Sign In</SignIn><Spacer />
              <Icon name="down" w={3} /><Spacer /><Icon name="cart" w={10} /><Spacer $w={6} /><Icon name="tri" w={10} /><Spacer $w={4} /><Icon name="down" w={3} /><Spacer $w={8} />
              <HelpMark>?</HelpMark><Icon name="down" w={3} /><Spacer $w={3} />
            </InfoCenter>
            <WindowButtons>
              <Tool aria-label="Minimize"><Icon name="min" w={8} /></Tool><Tool aria-label="Restore"><Icon name="restore" w={10} /></Tool><Tool aria-label="Close"><Icon name="close" w={10} /></Tool>
            </WindowButtons>
          </TitleRight>
        </TitleRow>
        <MenuRow>
          {['File', 'Edit', 'View', 'Insert', 'Format', 'Tools', 'Draw', 'Dimension', 'Modify', 'Parametric', 'Window', 'Help', 'Express'].map((m) => <button key={m}>{m}</button>)}
          <MenuEnd>
            <Tool aria-label="Minimize drawing"><Icon name="min" w={8} /></Tool><Tool aria-label="Restore drawing"><Icon name="restore" w={9} /></Tool><Tool aria-label="Close drawing"><Icon name="close" w={8} /></Tool>
          </MenuEnd>
        </MenuRow>
      </HeaderRows>
    </Header>
    <RibbonTabs>
      {['Home', 'Insert', 'Annotate', 'Parametric', 'View', 'Manage', 'Output', 'Add-ins', 'Collaborate', 'Express Tools', 'Featured Apps'].map((t, i) => <RibbonTab key={t} $on={i === 0}>{t}</RibbonTab>)}
      <RibbonTab aria-label="Ribbon display">
        <svg width="28" height="7" viewBox="0 0 28 7"><rect x="9" y="1" width="9" height="5" rx="1" fill="#c9ced6" /><rect x="12" y="3" width="3" height="1" fill="#222933" /><path d="M22 3h3l-1.500 2z" fill="#c9ced6" /></svg>
      </RibbonTab>
    </RibbonTabs>
    <RibbonPanels />
    <FileTabs>
      <FileTab>Start</FileTab>
      <FileTab $on>Drawing2*<Icon name="thinClose" w={8} /></FileTab>
      <AddTab aria-label="New tab"><Icon name="plus" w={7} /></AddTab>
    </FileTabs>
    <Work>
      <Properties />
      <Right>
        <Canvas>
          <GridSvg>
            <defs>
              <pattern id="major" x="15" y="31" width="52.330" height="52.330" patternUnits="userSpaceOnUse">
                <path d="M10.500 0v52M21 0v52M31.500 0v52M42 0v52M0 10.500h52M0 21h52M0 31.500h52M0 42h52" stroke="#242b34" fill="none" />
                <path d="M0.500 0v53M0 0.500h53" stroke="#2b343e" fill="none" />
              </pattern>
            </defs>
            <rect width="100%" height="100%" fill="url(#major)" />
          </GridSvg>
          <ViewLabel>[−][Top][2D Wireframe]</ViewLabel>
          <Ucs width="60" height="60" viewBox="0 0 60 60">
            <path d="M6.500 12v35M3.500 44.500h6v6h-6zM6.500 47.500h33" fill="none" stroke="#d0d3d8" />
            <g fill="none" stroke="#d0d3d8"><path d="M7 4l4 4 4-4M11 8v5M42 43l8 8M50 43l-8 8" /></g>
          </Ucs>
          <Nav />
          <LayerManager />
          <LineweightDialog />
        </Canvas>
        <Command>
          <CommandStrip>
            <svg width="12" height="3" viewBox="0 0 12 3"><path d="M0 1h12" stroke="#8b93a0" strokeWidth="3" strokeDasharray="1 1" /></svg>
            <Tool aria-label="Close command line"><Icon name="close" w={9} /></Tool><Tool aria-label="Customize command line"><Icon name="wrench" w={11} /></Tool>
          </CommandStrip>
          <CommandMain>
            <History><div>Command:</div><div>Command:</div></History>
            <Entry><Icon name="prompt" w={11} /><Icon name="down" w={4} /><EntryInput aria-label="Command" placeholder="Type a command" /></Entry>
          </CommandMain>
        </Command>
      </Right>
    </Work>
    <LayoutTabs>
      <LayoutTab $on>Model</LayoutTab><LayoutTab>Layout1</LayoutTab><LayoutTab>Layout2</LayoutTab>
      <LayoutTab aria-label="New layout"><Icon name="plus" w={6} /></LayoutTab>
    </LayoutTabs>
    <Foot>
      <Cell $w={31}>MODEL</Cell>
      {cells.map(([n, w, on], i) => <Cell key={i} $w={w} $on={on} aria-label={n}><Icon name={n} w={n === 'down' ? 5 : 12} /></Cell>)}
      <Cell $w={23}>1:1<Icon name="down" w={5} /></Cell>
      {cellsEnd.map(([n, w], i) => <Cell key={i} $w={w} aria-label={n}><Icon name={n} w={n === 'down' ? 5 : 12} /></Cell>)}
      <FootLine $x={32} $w={230} $c="#e8e8e8" />
      <FootLine $x={395} $w={31} $c="#6d747f" />
    </Foot>
  </Shell>
);

export default App;
